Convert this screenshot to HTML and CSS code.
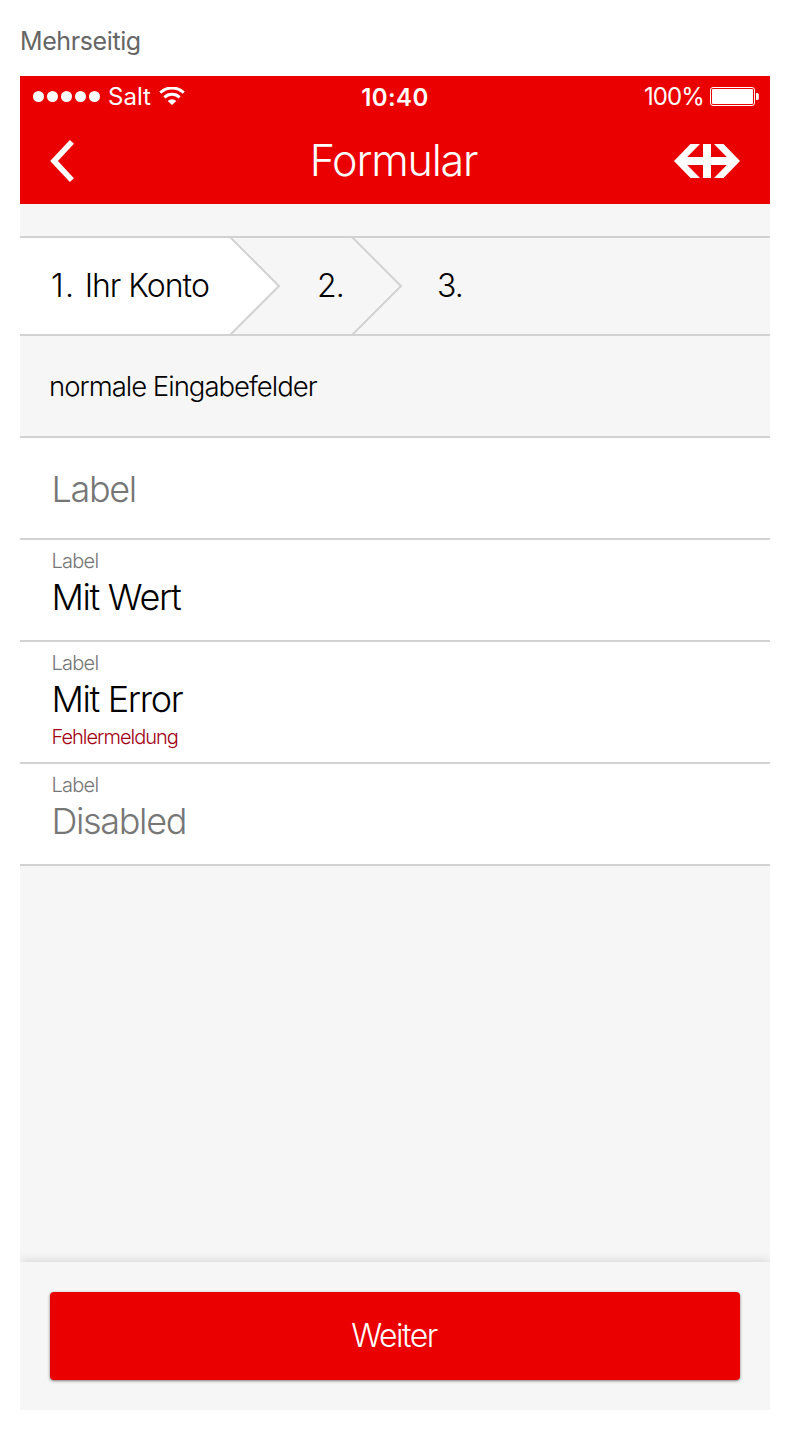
FILE: index.html
```html
<!DOCTYPE html>
<html lang="de">
<head>
<meta charset="utf-8">
<title>Mehrseitig</title>
<link rel="stylesheet" href="styles.css">
</head>
<body>
<h1 class="caption">Mehrseitig</h1>
<main class="phone">
  <header class="header">
    <div class="status">
      <div class="status-left">
        <svg class="signal" width="68" height="12" viewBox="0 0 68 12" fill="#fff"><circle cx="5.5" cy="5.500" r="5.5"/><circle cx="19.5" cy="5.500" r="5.5"/><circle cx="33.5" cy="5.500" r="5.5"/><circle cx="47.5" cy="5.500" r="5.5"/><circle cx="61.5" cy="5.500" r="5.5"/></svg>
        <span class="carrier">Salt</span>
        <svg class="wifi" width="26" height="20" viewBox="0 0 26 20"><path d="M1.200 5.700a17 17 0 0 1 23.600 0M5.400 10.400a11 11 0 0 1 15.200 0" fill="none" stroke="#fff" stroke-width="3"/><path d="M8.700 13.900a6.200 6.200 0 0 1 8.600 0L13 18.100z" fill="#fff"/></svg>
      </div>
      <span class="clock">10:40</span>
      <div class="status-right">
        <span class="percent">100%</span>
        <svg class="battery" width="49" height="20" viewBox="0 0 49 20"><rect x=".5" y=".5" width="44" height="18" rx="2.500" fill="none" stroke="#fff"/><rect x="2" y="2" width="41" height="15" rx="1" fill="#fff"/><path d="M46 6h1.200q1.600 0 1.600 1.600v3.800q0 1.600-1.600 1.600H46z" fill="#fff"/></svg>
      </div>
    </div>
    <div class="navbar">
      <svg class="back" width="26" height="44" viewBox="0 0 26 44"><path d="M21.900 2.800L4 22l17.900 19.200" fill="none" stroke="#fff" stroke-width="5.600"/></svg>
      <span class="title">Formular</span>
      <svg class="logo" width="66" height="34" viewBox="0 0 66 34" fill="#fff"><path d="M0 17L16.500 0H26L13.200 13H29V0h8v13h15.800L40 0h9.500L66 17 49.500 34H40l12.800-13H37v13h-8V21H13.200L26 34h-9.500z"/></svg>
    </div>
  </header>
  <nav class="steps">
    <div class="step step-active"><span class="number">1.</span>Ihr Konto</div>
    <svg class="arrow" width="52" height="96" viewBox="0 0 52 96"><path d="M0 0h1.500l48 48-48 48H0z" fill="#fff"/><path d="M1 -1l49 49L1 97" fill="none" stroke="#d2d2d2" stroke-width="2"/></svg>
    <div class="step step-two">2.</div>
    <svg class="arrow" width="52" height="96" viewBox="0 0 52 96"><path d="M1 -1l49 49L1 97" fill="none" stroke="#d2d2d2" stroke-width="2"/></svg>
    <div class="step step-three">3.</div>
  </nav>
  <h2 class="section">normale Eingabefelder</h2>
  <form class="fields">
    <div class="field field-empty"><span class="value muted">Label</span></div>
    <div class="field"><span class="label">Label</span><span class="value">Mit Wert</span></div>
    <div class="field field-error"><span class="label">Label</span><span class="value">Mit Error</span><span class="error">Fehlermeldung</span></div>
    <div class="field"><span class="label">Label</span><span class="value muted">Disabled</span></div>
  </form>
  <footer class="footer"><button class="button" type="button">Weiter</button></footer>
</main>
</body>
</html>
```
FILE: styles.css
```css
* { box-sizing: border-box; }

body {
  margin: 0;
  padding: 0 20px;
  background: #fff;
  color: #000;
  font-family: Inter, "Liberation Sans", sans-serif;
  font-weight: 300;
  white-space: nowrap;
}

svg { display: block; flex: none; }

.caption {
  margin: 0;
  height: 76px;
  padding-top: 24px;
  font-size: 25px;
  line-height: 34px;
  font-weight: 400;
  letter-spacing: -0.4px;
  color: #666;
}

.phone {
  display: flex;
  flex-direction: column;
  width: 750px;
  height: 1334px;
  background: #f6f6f6;
}

/* Header */
.header { height: 128px; flex: none; background: #eb0000; color: #fff; }

.status {
  display: grid;
  grid-template-columns: 1fr auto 1fr;
  align-items: center;
  height: 42px;
  padding: 0 11px 0 13px;
  font-size: 24px;
  line-height: 30px;
  font-weight: 400;
}
.status-left, .status-right { display: flex; align-items: center; }
.status-left { gap: 7px; }
.status-right { justify-content: flex-end; gap: 6px; }
.wifi { margin-left: 1px; }
.carrier { padding-bottom: 1px; }
.clock { font-weight: 600; letter-spacing: 0.4px; padding: 2px 2px 0 0; }
.percent { letter-spacing: -0.9px; }

.navbar {
  display: grid;
  grid-template-columns: 66px 1fr 66px;
  align-items: center;
  height: 86px;
  padding: 0 30px;
}
.title {
  text-align: center;
  font-size: 43px;
  line-height: 52px;
  letter-spacing: -1.15px;
  padding: 0 3px 2px 0;
}

/* Step indicator */
.steps {
  display: flex;
  height: 100px;
  margin-top: 32px;
  flex: none;
  border: solid #d2d2d2;
  border-width: 2px 0;
  font-size: 32px;
}
.step { display: flex; align-items: center; padding-bottom: 2px; letter-spacing: -1px; }
.number { margin-right: 9px; letter-spacing: 1.5px; }
.step-active { width: 209px; padding-left: 31px; background: #fff; }
.step-two { width: 70px; padding-left: 36px; }
.step-three { padding-left: 34px; }

.section {
  display: flex;
  align-items: center;
  flex: none;
  height: 100px;
  margin: 0;
  padding-left: 29px;
  font-size: 27.5px;
  font-weight: 300;
  letter-spacing: -1px;
}

/* Form fields */
.fields { border-top: 2px solid #d2d2d2; background: #fff; }
.field {
  display: flex;
  flex-direction: column;
  align-items: flex-start;
  height: 102px;
  padding: 8px 31.5px 0;
  border-bottom: 2px solid #d2d2d2;
}
.field-empty { padding-top: 28px; }
.field-error { height: 122px; }
.label, .error { font-size: 20px; line-height: 26px; color: #767676; }
.label { letter-spacing: -0.75px; }
.error { margin-top: 2px; letter-spacing: -1px; color: #a20013; }
.value { font-size: 36px; line-height: 46px; letter-spacing: -1.35px; }
.muted { color: #767676; }

/* Bottom bar */
.footer {
  flex: none;
  height: 148px;
  margin-top: auto;
  padding: 30px;
  background: #f6f6f6;
  box-shadow: 0 0 10px rgba(0, 0, 0, .17);
  clip-path: inset(-12px 0 0);
}
.button {
  display: block;
  width: 690px;
  height: 88px;
  padding: 0 2px 1px 0;
  border: 0;
  border-radius: 4px;
  background: #eb0000;
  color: #fff;
  font: 300 32px Inter, "Liberation Sans", sans-serif;
  letter-spacing: -1.5px;
  box-shadow: 0 1px 3px rgba(0, 0, 0, .5);
}
```
